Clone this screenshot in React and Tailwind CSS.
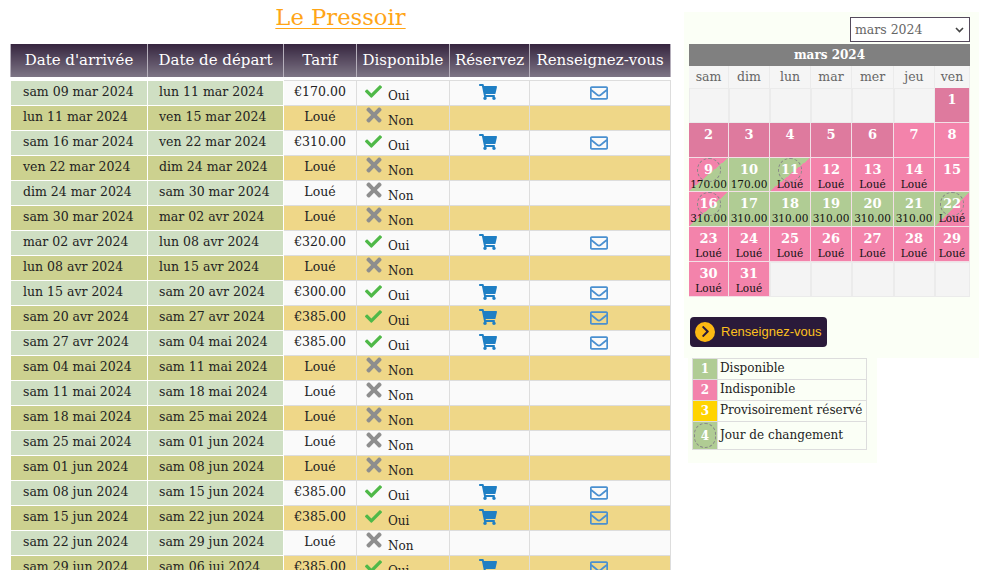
import { FaCheck, FaTimes, FaShoppingCart, FaRegEnvelope, FaChevronRight } from "react-icons/fa";

const rows = [
  ["sam 09 mar 2024", "lun 11 mar 2024", "€170.00"],
  ["lun 11 mar 2024", "ven 15 mar 2024", null],
  ["sam 16 mar 2024", "ven 22 mar 2024", "€310.00"],
  ["ven 22 mar 2024", "dim 24 mar 2024", null],
  ["dim 24 mar 2024", "sam 30 mar 2024", null],
  ["sam 30 mar 2024", "mar 02 avr 2024", null],
  ["mar 02 avr 2024", "lun 08 avr 2024", "€320.00"],
  ["lun 08 avr 2024", "lun 15 avr 2024", null],
  ["lun 15 avr 2024", "sam 20 avr 2024", "€300.00"],
  ["sam 20 avr 2024", "sam 27 avr 2024", "€385.00"],
  ["sam 27 avr 2024", "sam 04 mai 2024", "€385.00"],
  ["sam 04 mai 2024", "sam 11 mai 2024", null],
  ["sam 11 mai 2024", "sam 18 mai 2024", null],
  ["sam 18 mai 2024", "sam 25 mai 2024", null],
  ["sam 25 mai 2024", "sam 01 jun 2024", null],
  ["sam 01 jun 2024", "sam 08 jun 2024", null],
  ["sam 08 jun 2024", "sam 15 jun 2024", "€385.00"],
  ["sam 15 jun 2024", "sam 22 jun 2024", "€385.00"],
  ["sam 22 jun 2024", "sam 29 jun 2024", null],
  ["sam 29 jun 2024", "sam 06 jui 2024", "€385.00"],
];

const headers = ["Date d'arrivée", "Date de départ", "Tarif", "Disponible", "Réservez", "Renseignez-vous"];
const days = ["sam", "dim", "lun", "mar", "mer", "jeu", "ven"];

const PINK = "bg-[#f383ab]";
const PAST = "bg-[#de7a9e]";
const GREEN = "bg-[#b0cc94]";
const GREEN_IN = "bg-[linear-gradient(to_bottom_right,#f383ab_50%,#b0cc94_50%)]";
const GREEN_OUT = "bg-[linear-gradient(to_bottom_right,#b0cc94_50%,#f383ab_50%)]";

// calendar cells: [day, sub label, background, change-day circle]
const cells = [
  ...Array(6).fill(null),
  [1, "", PAST],
  [2, "", PAST], [3, "", PAST], [4, "", PAST], [5, "", PAST], [6, "", PAST], [7, "", PINK], [8, "", PINK],
  [9, "170.00", GREEN_IN, true], [10, "170.00", GREEN], [11, "Loué", GREEN_OUT, true], [12, "Loué", PINK], [13, "Loué", PINK], [14, "Loué", PINK], [15, "", PINK],
  [16, "310.00", GREEN_IN, true], [17, "310.00", GREEN], [18, "310.00", GREEN], [19, "310.00", GREEN], [20, "310.00", GREEN], [21, "310.00", GREEN], [22, "Loué", GREEN_OUT, true],
  [23, "Loué", PINK], [24, "Loué", PINK], [25, "Loué", PINK], [26, "Loué", PINK], [27, "Loué", PINK], [28, "Loué", PINK], [29, "Loué", PINK],
  [30, "Loué", PINK], [31, "Loué", PINK],
  ...Array(5).fill(null),
];

const legend = [
  [1, "Disponible", "bg-[#b0cc94]", "h-[21px]"],
  [2, "Indisponible", "bg-[#f383ab]", "h-[21px]"],
  [3, "Provisoirement réservé", "bg-[#ffd400]", "h-[21px]"],
  [4, "Jour de changement", "bg-[#b0cc94]", "h-[27px]"],
];

function Row({ row, odd }) {
  const [from, to, price] = row;
  const dateBg = odd ? "bg-[#cfdfc3]" : "bg-[#ccd18f]";
  const restBg = odd ? "bg-[#fafafa]" : "bg-[#efd788]";
  const dateCell = `border border-white ${dateBg} text-left`;
  const cell = `border border-[#dddddd] ${restBg} text-center`;
  return (
    <tr className="h-[25px]">
      <td className={`${dateCell} pl-[12px]`}>{from}</td>
      <td className={`${dateCell} pl-[11px]`}>{to}</td>
      <td className={cell}>{price || "Loué"}</td>
      <td className={`${cell} text-left pl-[8px]`}>
        <div className="flex items-start">
          {price ? (
            <FaCheck className="text-[#4fb948] text-[17px] mr-[6px] mt-[2px]" />
          ) : (
            <FaTimes className="text-[#8e8e8e] text-[22px] mr-[3px] -ml-[2px] -mt-[2px]" />
          )}
          <span className="text-[12px] mt-[6px] leading-[18px]">{price ? "Oui" : "Non"}</span>
        </div>
      </td>
      <td className={cell}>
        {price && <FaShoppingCart className="inline-block text-[#1f7fc4] text-[18px] mr-[4px] mb-[2px]" />}
      </td>
      <td className={cell}>
        {price && <FaRegEnvelope className="inline-block text-[#4a90d0] text-[18px] mr-[3px]" />}
      </td>
    </tr>
  );
}

function CalCell({ cell }) {
  if (!cell) return <div className="bg-[#f4f4f4] border border-[#ebebeb]" />;
  const [day, sub, bg, change] = cell;
  return (
    <div className={`${bg} relative flex flex-col items-center border-r border-b border-[#f3dfe6]`}>
      <span className="text-white text-[13px] font-bold leading-[16px] mt-[4px]">{day}</span>
      {sub && <span className="text-[#111] text-[10.5px] leading-[12px]">{sub}</span>}
      {change && (
        <span className="absolute top-0 left-1/2 -translate-x-1/2 w-[24px] h-[24px] rounded-full border border-dashed border-[#888]" />
      )}
    </div>
  );
}

export default function App() {
  return (
    <div className="w-[1000px] h-[570px] overflow-hidden bg-white flex font-['DejaVu_Serif',serif] text-[#222]">
      {/* Left: rates table */}
      <div className="w-[684px] pl-[10px] shrink-0">
        <h1 className="h-[44px] pr-[13px] pt-[1px] text-center text-[22.7px] leading-[32px]">
          <a className="text-[#ffa516] underline underline-offset-[3px] decoration-1">Le Pressoir</a>
        </h1>
        <table className="table-fixed border-collapse w-[660px] text-[12.5px]">
          <colgroup>
            <col className="w-[137px]" />
            <col className="w-[136px]" />
            <col className="w-[73px]" />
            <col className="w-[93px]" />
            <col className="w-[80px]" />
            <col className="w-[141px]" />
          </colgroup>
          <thead>
            <tr className="h-[33px]">
              {headers.map((h) => (
                <th
                  key={h}
                  className="border-x border-[#b5afbb] font-normal text-white text-[15px] whitespace-nowrap bg-[linear-gradient(to_bottom,#36253f,#7d7585)]"
                >
                  {h}
                </th>
              ))}
            </tr>
            <tr className="h-[3px]"><th colSpan={6} /></tr>
          </thead>
          <tbody>
            {rows.map((row, i) => (
              <Row key={row[0]} row={row} odd={i % 2 === 0} />
            ))}
          </tbody>
        </table>
      </div>

      {/* Right: availability calendar */}
      <div className="w-[296px] pt-[12px]">
        <div className="w-[295px] h-[346px] bg-[#fbfff6] pl-[5px] pt-[5px]">
          <div className="w-[281px] flex justify-end h-[27px]">
            <div className="w-[120px] h-[25px] bg-white border border-[#554a5c] flex items-center justify-between pl-[4px] pr-[5px] text-[12.5px] text-[#666]">
              <span className="mt-[1px]">mars 2024</span>
              <svg width="9" height="6" viewBox="0 0 9 6"><path d="M1 1l3.5 3.5L8 1" fill="none" stroke="#444" strokeWidth="1.6" /></svg>
            </div>
          </div>
          <div className="w-[281px]">
            <div className="h-[22px] bg-[#808080] text-white text-center text-[12px] font-bold leading-[22px]">mars 2024</div>
            <div className="grid grid-cols-[40px_41px_41px_41px_42px_41px_35px] h-[22px]">
              {days.map((d) => (
                <div key={d} className="bg-[#f5f5f5] border-r border-[#ebebeb] text-center text-[#666] text-[12.5px] leading-[22px]">{d}</div>
              ))}
            </div>
            <div className="grid grid-cols-[40px_41px_41px_41px_42px_41px_35px] auto-rows-[34.8px]">
              {cells.map((c, i) => (
                <CalCell key={i} cell={c} />
              ))}
            </div>
          </div>
          <button className="mt-[20px] ml-[1px] w-[137px] h-[30px] bg-[#2a1a3a] rounded-[4px] flex items-center pl-[5px] font-['Liberation_Sans',sans-serif] text-[13px] whitespace-nowrap text-[#fdc01e]">
            <span className="w-[20px] h-[20px] rounded-full bg-[#fdb913] flex items-center justify-center mr-[6px]">
              <FaChevronRight className="text-[#2a1a3a] text-[13px]" />
            </span>
            Renseignez-vous
          </button>
        </div>
        {/* Legend */}
        <div className="w-[189px] h-[105px] bg-[#fbfff6] ml-[4px] pl-[4px]">
          <div className="w-[175px] border border-[#dddddd]">
            {legend.map(([n, label, bg, h]) => (
              <div key={n} className={`flex ${h} border-b last:border-b-0 border-[#dddddd]`}>
                <div className={`w-[25px] ${bg} relative flex items-center justify-center text-white text-[12px] font-bold border-r border-[#dddddd]`}>
                  {n}
                  {n === 4 && <span className="absolute inset-[1px] rounded-full border border-dashed border-[#888]" />}
                </div>
                <div className="pl-[2px] pb-[2px] text-[12px] flex items-center whitespace-nowrap">{label}</div>
              </div>
            ))}
          </div>
        </div>
      </div>
    </div>
  );
}
